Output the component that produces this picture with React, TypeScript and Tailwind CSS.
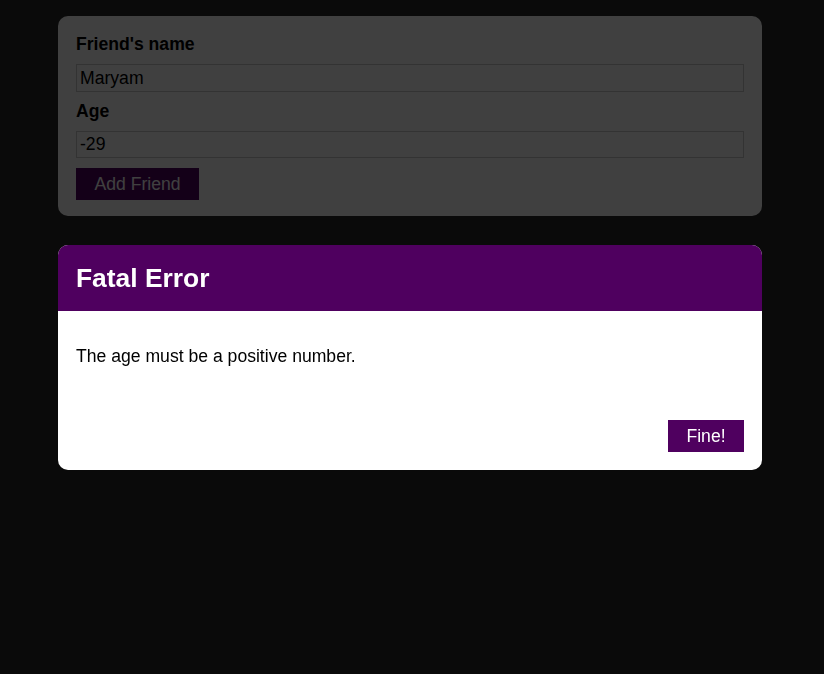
import React from 'react';

export default function App() {
  return (
    <div className="min-h-screen bg-[#282828] pt-4 font-['Liberation_Sans',Arial,sans-serif] text-[17.6px] text-black">
      {/* Add friend form */}
      <div className="ml-[58px] w-[704px] rounded-[10px] bg-white px-[18px] pt-4 pb-4">
        <form onSubmit={e => e.preventDefault()}>
          <label className="mb-2 block font-bold leading-6">Friend's name</label>
          <input
            defaultValue="Maryam"
            className="mb-[7px] block h-[28px] w-full border border-[#ccc] px-[3px] leading-[22px] outline-none"
          />
          <label className="mb-2 block font-bold leading-6">Age</label>
          <input
            defaultValue="-29"
            className="mb-[10px] block h-[27px] w-full border border-[#ccc] px-[3px] leading-[22px] outline-none"
          />
          <button className="h-8 w-[123px] bg-[#4f005f] text-white leading-6">Add Friend</button>
        </form>
      </div>

      {/* Backdrop */}
      <div className="fixed inset-0 bg-black/75" />

      {/* Error modal */}
      <div className="fixed top-[245px] left-[58px] w-[704px] overflow-hidden rounded-[10px] bg-white">
        <header className="flex h-[66px] items-center bg-[#4f005f] px-[18px]">
          <h2 className="text-[26.4px] font-bold leading-none text-white">Fatal Error</h2>
        </header>
        <div className="px-[18px] pt-[33px] pb-[52px]">
          <p className="leading-6">The age must be a positive number.</p>
        </div>
        <footer className="flex justify-end px-[18px] pb-[18px]">
          <button className="h-8 w-[76px] bg-[#4f005f] text-white leading-6">Fine!</button>
        </footer>
      </div>
    </div>
  );
}
